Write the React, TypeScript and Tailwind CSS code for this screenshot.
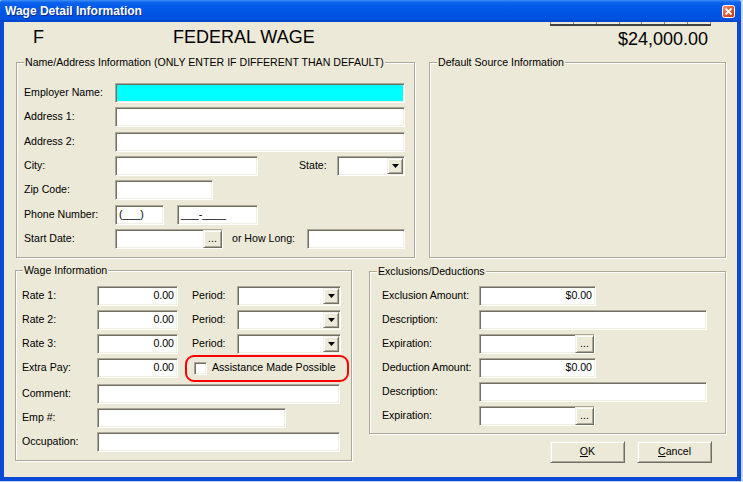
import React from "react";

const sunken =
  "border border-t-[#aca899] border-l-[#aca899] border-r-white border-b-white shadow-[inset_1px_1px_0_#716f64,inset_-1px_-1px_0_#f1efe2]";
const raised =
  "border border-t-[#f1efe2] border-l-[#f1efe2] border-r-[#716f64] border-b-[#716f64] shadow-[inset_1px_1px_0_#fff,inset_-1px_-1px_0_#aca899] bg-[#ece9d8]";

const Input = ({
  w,
  value = "",
  right = false,
  cyan = false,
  dots = false,
}: {
  w: string;
  value?: string;
  right?: boolean;
  cyan?: boolean;
  dots?: boolean;
}) => (
  <div
    className={`${w} h-[20px] shrink-0 flex items-center ${sunken} ${cyan ? "bg-[#00ffff]" : "bg-white"} ${
      right ? "justify-end pr-[3px]" : "pl-[3px]"
    } whitespace-pre`}
  >
    {value}
    {dots && (
      <div className={`ml-auto h-[18px] w-[19px] flex items-end justify-center pb-[3px] leading-none ${raised}`}>
        ...
      </div>
    )}
  </div>
);

const Select = ({ w }: { w: string }) => (
  <div className={`${w} h-[20px] shrink-0 flex items-center justify-end pr-[1px] bg-white ${sunken}`}>
    <div className={`h-[16px] w-[16px] flex items-center justify-center ${raised}`}>
      <svg width="7" height="4" viewBox="0 0 7 4">
        <path d="M0 0h7L3.5 4z" fill="#000" />
      </svg>
    </div>
  </div>
);

const Group = ({
  title,
  className,
  children,
}: {
  title: string;
  className: string;
  children?: React.ReactNode;
}) => (
  <fieldset
    className={`border border-[#aca899] shadow-[inset_1px_1px_0_#fff,1px_1px_0_#fff] ${className}`}
  >
    <legend className="ml-[7px] px-[1px] bg-[#ece9d8] leading-[13px]">{title}</legend>
    {children}
  </fieldset>
);

const Row = ({ children, className = "" }: { children: React.ReactNode; className?: string }) => (
  <div className={`flex items-center h-[20px] ${className}`}>{children}</div>
);

const Button = ({ children }: { children: React.ReactNode }) => (
  <div className={`w-[75px] h-[22px] flex items-center justify-center ${raised}`}>{children}</div>
);

export default function App() {
  return (
    <div className="w-[743px] h-[482px] bg-[#c9d7f0] font-['Liberation_Sans',Arial,sans-serif] text-[10.6px] text-black">
      <div className="w-[741px] h-[481px] flex flex-col">
        {/* Title bar */}
        <div className="h-[22px] shrink-0 flex items-center pl-[5px] pr-[6px] rounded-t-[2px] bg-[linear-gradient(to_bottom,#3c8ef7_0%,#0a62ee_12%,#0056e6_45%,#0052e0_85%,#0044c8_100%)]">
          <span className="text-white font-bold text-[12px] leading-none [text-shadow:1px_1px_0_#0a2f8c]">
            Wage Detail Information
          </span>
          <svg className="ml-auto" width="13" height="13" viewBox="0 0 13 13">
            <defs>
              <linearGradient id="cx" x1="0" y1="0" x2="1" y2="1">
                <stop offset="0" stopColor="#f0a080" />
                <stop offset="0.5" stopColor="#e0552e" />
                <stop offset="1" stopColor="#c23a18" />
              </linearGradient>
            </defs>
            <rect x="0.5" y="0.5" width="12" height="12" rx="2" fill="url(#cx)" stroke="#fff" />
            <path d="M3.5 3.5l6 6M9.5 3.5l-6 6" stroke="#fff" strokeWidth="1.8" />
          </svg>
        </div>

        {/* Client area */}
        <div className="flex-1 flex flex-col border-l-4 border-r-4 border-b-4 border-[#0a48d6] bg-[#ece9d8]">
          {/* Header */}
          <div className="h-[34px] shrink-0 flex items-start">
            <div className="ml-[29px] w-[140px] mt-[5px] text-[18px] leading-[20px]">F</div>
            <div className="mt-[5px] text-[18px] leading-[20px]">FEDERAL WAGE</div>
            <div className="ml-auto flex flex-col items-end">
              <div className="mr-[26px] w-[161px] flex flex-col">
                <div className="flex h-[2px]">
                  {[0, 1, 2, 3, 4, 5, 6].map((i) => (
                    <div key={i} className="flex-1 border-l border-[#808080] bg-[#ece9d8] last:border-r" />
                  ))}
                </div>
                <div className="h-[2px] bg-[#404040]" />
              </div>
              <div className="mr-[29px] mt-[3px] text-[18px] leading-[20px]">$24,000.00</div>
            </div>
          </div>

          {/* Name/Address + Default source */}
          <div className="flex pl-[12px]">
            <Group
              title="Name/Address Information (ONLY ENTER IF DIFFERENT THAN DEFAULT)"
              className="w-[399px] h-[202px]"
            >
              <div className="flex flex-col gap-y-[4.33px] w-[388px] pl-[7px] pt-[14px]">
                <Row>
                  <span className="w-[91px] shrink-0">Employer Name:</span>
                  <Input w="w-[290px]" cyan />
                </Row>
                <Row>
                  <span className="w-[91px] shrink-0">Address 1:</span>
                  <Input w="w-[290px]" />
                </Row>
                <Row>
                  <span className="w-[91px] shrink-0">Address 2:</span>
                  <Input w="w-[290px]" />
                </Row>
                <Row>
                  <span className="w-[91px] shrink-0">City:</span>
                  <Input w="w-[143px]" />
                  <span className="ml-[41px]">State:</span>
                  <div className="ml-auto">
                    <Select w="w-[68px]" />
                  </div>
                </Row>
                <Row>
                  <span className="w-[91px] shrink-0">Zip Code:</span>
                  <Input w="w-[98px]" />
                </Row>
                <Row>
                  <span className="w-[91px] shrink-0">Phone Number:</span>
                  <Input w="w-[49px]" value="(___)" />
                  <div className="ml-[13px]">
                    <Input w="w-[81px]" value="___-____" />
                  </div>
                </Row>
                <Row>
                  <span className="w-[91px] shrink-0">Start Date:</span>
                  <Input w="w-[108px]" dots />
                  <span className="ml-[9px]">or How Long:</span>
                  <div className="ml-auto">
                    <Input w="w-[98px]" />
                  </div>
                </Row>
              </div>
            </Group>
            <Group title="Default Source Information" className="ml-[14px] w-[297px] h-[202px]" />
          </div>

          {/* Wage + Exclusions */}
          <div className="flex pl-[11px] mt-[6px]">
            <Group title="Wage Information" className="w-[337px] h-[197px]">
              <div className="flex flex-col gap-y-[4px] pl-[6px] pt-[9px]">
                {["Rate 1:", "Rate 2:", "Rate 3:"].map((r) => (
                  <Row key={r}>
                    <span className="w-[75px] shrink-0">{r}</span>
                    <Input w="w-[81px]" value="0.00" right />
                    <span className="ml-[14px] w-[45px] shrink-0">Period:</span>
                    <Select w="w-[104px]" />
                  </Row>
                ))}
                <Row>
                  <span className="w-[75px] shrink-0">Extra Pay:</span>
                  <Input w="w-[81px]" value="0.00" right />
                  <div className="ml-[7px] -my-[4px] w-[164px] h-[27px] shrink-0 flex items-center pl-[7px] border-2 border-[#ff0000] rounded-[9px]">
                    <div className={`w-[13px] h-[13px] bg-white ${sunken}`} />
                    <span className="ml-[5px]">Assistance Made Possible</span>
                  </div>
                </Row>
                <Row className="mt-[2px]">
                  <span className="w-[75px] shrink-0">Comment:</span>
                  <Input w="w-[243px]" />
                </Row>
                <Row>
                  <span className="w-[75px] shrink-0">Emp #:</span>
                  <Input w="w-[189px]" />
                </Row>
                <Row>
                  <span className="w-[75px] shrink-0">Occupation:</span>
                  <Input w="w-[243px]" />
                </Row>
              </div>
            </Group>

            <div className="ml-[17px] flex flex-col">
              <Group title="Exclusions/Deductions" className="mt-[1px] w-[357px] h-[169px]">
                <div className="flex flex-col gap-y-[4px] pl-[12px] pt-[8px]">
                  <Row>
                    <span className="w-[97px] shrink-0">Exclusion Amount:</span>
                    <Input w="w-[117px]" value="$0.00" right />
                  </Row>
                  <Row>
                    <span className="w-[97px] shrink-0">Description:</span>
                    <Input w="w-[228px]" />
                  </Row>
                  <Row>
                    <span className="w-[97px] shrink-0">Expiration:</span>
                    <Input w="w-[116px]" dots />
                  </Row>
                  <Row>
                    <span className="w-[97px] shrink-0">Deduction Amount:</span>
                    <Input w="w-[117px]" value="$0.00" right />
                  </Row>
                  <Row>
                    <span className="w-[97px] shrink-0">Description:</span>
                    <Input w="w-[228px]" />
                  </Row>
                  <Row>
                    <span className="w-[97px] shrink-0">Expiration:</span>
                    <Input w="w-[116px]" dots />
                  </Row>
                </div>
              </Group>
              <div className="mt-[7px] flex justify-end gap-[12px] pr-[14px]">
                <Button>
                  <span>
                    <span className="underline">O</span>K
                  </span>
                </Button>
                <Button>
                  <span>
                    <span className="underline">C</span>ancel
                  </span>
                </Button>
              </div>
            </div>
          </div>
        </div>
      </div>
    </div>
  );
}
